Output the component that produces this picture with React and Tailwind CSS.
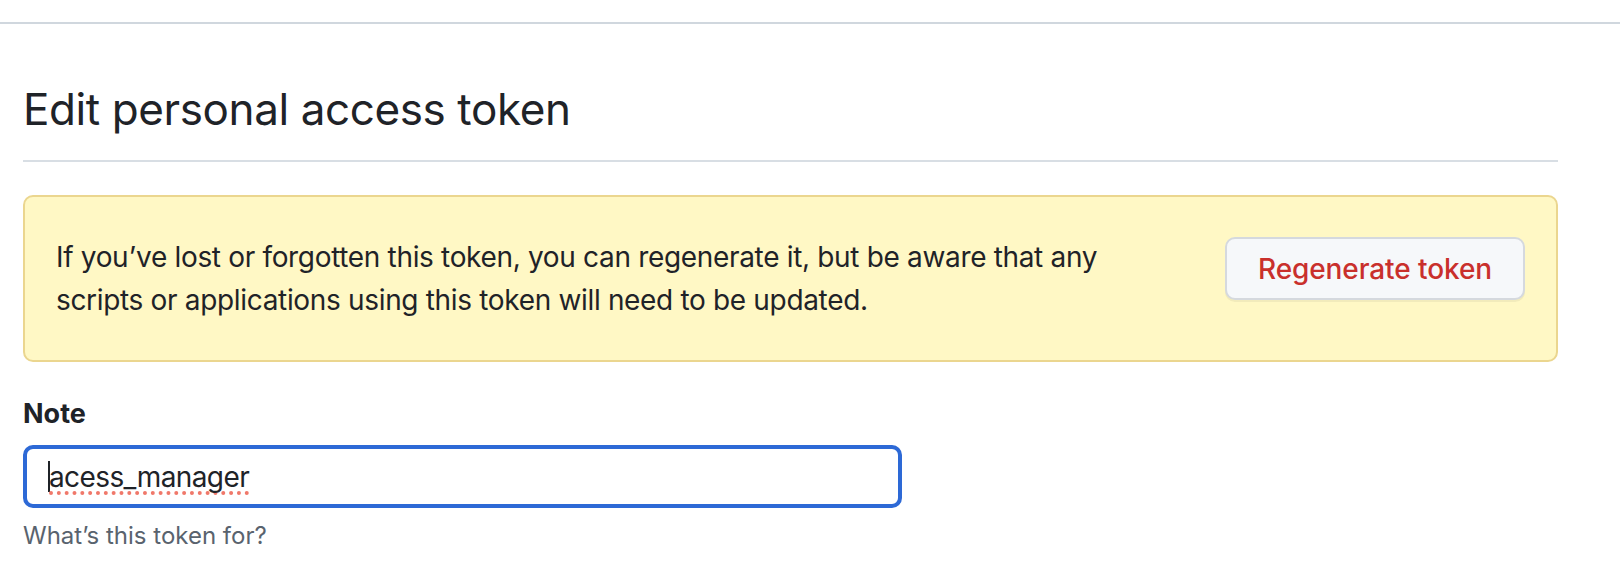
export default function App() {
  const font = { fontFamily: 'Inter, "Liberation Sans", sans-serif' };
  return (
    <div className="w-[1620px] h-[568px] bg-white overflow-hidden text-[#1f2328]" style={font}>
      <div className="pt-[22px]">
        <div className="border-t-2 border-[#d0d7de]" />
      </div>
      <div className="ml-[23px] w-[1535px]">
        <div className="pt-[57px] pb-[23px] border-b-2 border-[#d8dee4]">
          <h1 className="text-[44px] leading-[56px] font-normal tracking-[-0.4px]">Edit personal access token</h1>
        </div>
        <div className="mt-[33px] h-[167px] rounded-[10px] border-2 border-[#ebd68f] bg-[#fff8c5] px-[31px] pt-[39px] flex items-start justify-between">
          <p className="text-[28px] leading-[43px] m-0 tracking-[-0.33px]">
            If you’ve lost or forgotten this token, you can regenerate it, but be aware that any
            <br />
            scripts or applications using this token will need to be updated.
          </p>
          <button className="mt-[1px] w-[300px] h-[63px] rounded-[10px] border-2 border-[#d5d9de] bg-[#f6f8fa] text-[#c9302c] text-[28px] font-medium tracking-[-0.1px] shadow-[0_2px_0_rgba(31,35,40,0.06)] flex items-center justify-center">
            Regenerate token
          </button>
        </div>
        <div className="mt-[34px] text-[27px] leading-[36px] font-bold">Note</div>
        <div className="mt-[13px] w-[879px] h-[63px] rounded-[10px] border-4 border-[#2d69d6] flex items-center pl-[21px]">
          <span className="w-[2px] h-[31px] bg-[#1f2328] mr-[-1px]" />
          <span className="inline-block text-[28px] leading-[27px] tracking-[-0.6px] border-b-4 border-dotted border-[#f0786a] mt-[5px]">
            acess_manager
          </span>
        </div>
        <div className="mt-[10px] text-[24px] leading-[36px] text-[#59636e]">What’s this token for?</div>
      </div>
    </div>
  );
}
